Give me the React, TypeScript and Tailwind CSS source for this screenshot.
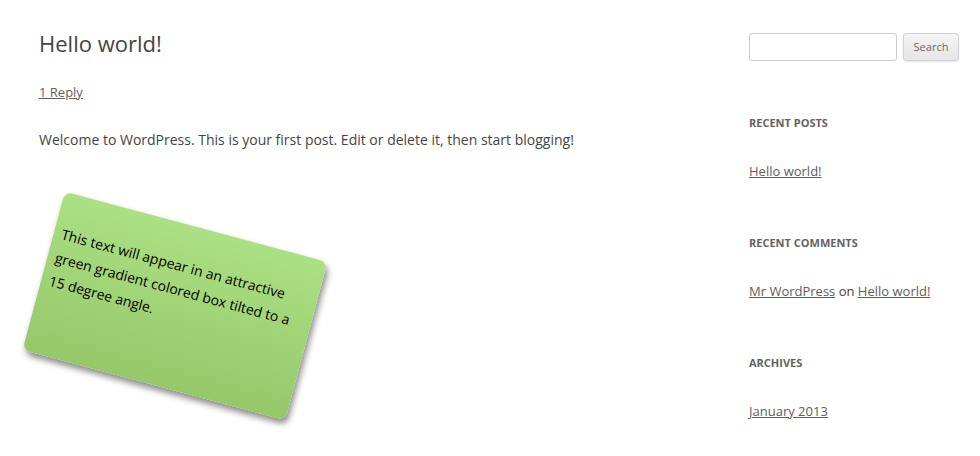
export default function App() {
  return (
    <div className="w-[980px] h-[456px] bg-white overflow-hidden font-['Open_Sans',sans-serif] text-[#444]">
      <div className="flex">
        <main className="w-[710px] shrink-0 pl-[39px] pt-[27px]">
          <h1 className="text-[22px] leading-[32px] font-normal text-[#444]">Hello world!</h1>
          <div className="mt-[21px] text-[13px] leading-[24px]">
            <a href="#" className="underline text-[#5e5e5e]">1 Reply</a>
          </div>
          <p className="mt-[24px] text-[14px] leading-[24px]">
            Welcome to WordPress. This is your first post. Edit or delete it, then start blogging!
          </p>
          <div className="mt-[72px] w-[272px] h-[164px] rotate-[15deg] rounded-[8px] bg-gradient-to-b from-[#abe083] to-[#96c86a] shadow-[3px_4px_6px_rgba(0,0,0,0.45)] px-[8px] pt-[30px] text-[14px] leading-[24px] text-black">
            This text will appear in an attractive green gradient colored box tilted to a 15 degree angle.
          </div>
        </main>
        <aside className="w-[270px] shrink-0 pl-[39px] pt-[33px]">
          <div className="flex gap-[6px]">
            <input className="w-[148px] h-[28px] shrink-0 border border-[#ccc] rounded-[3px]" />
            <button className="w-[56px] h-[28px] shrink-0 px-0 border border-[#d2d2d2] rounded-[3px] bg-gradient-to-b from-[#f4f4f4] to-[#e6e6e6] text-[11px] text-[#6a6a6a] shadow-[0_1px_2px_rgba(0,0,0,0.1)]">Search</button>
          </div>
          <h3 className="mt-[50px] text-[11px] font-bold leading-[24px] text-[#636363] uppercase">Recent Posts</h3>
          <div className="mt-[24px] text-[13px] leading-[24px]">
            <a href="#" className="underline text-[#5e5e5e]">Hello world!</a>
          </div>
          <h3 className="mt-[48px] text-[11px] font-bold leading-[24px] text-[#636363] uppercase">Recent Comments</h3>
          <div className="mt-[24px] text-[13px] leading-[24px] text-[#444]">
            <a href="#" className="underline text-[#5e5e5e]">Mr WordPress</a> on <a href="#" className="underline text-[#5e5e5e]">Hello world!</a>
          </div>
          <h3 className="mt-[48px] text-[11px] font-bold leading-[24px] text-[#636363] uppercase">Archives</h3>
          <div className="mt-[24px] text-[13px] leading-[24px]">
            <a href="#" className="underline text-[#5e5e5e]">January 2013</a>
          </div>
        </aside>
      </div>
    </div>
  );
}
